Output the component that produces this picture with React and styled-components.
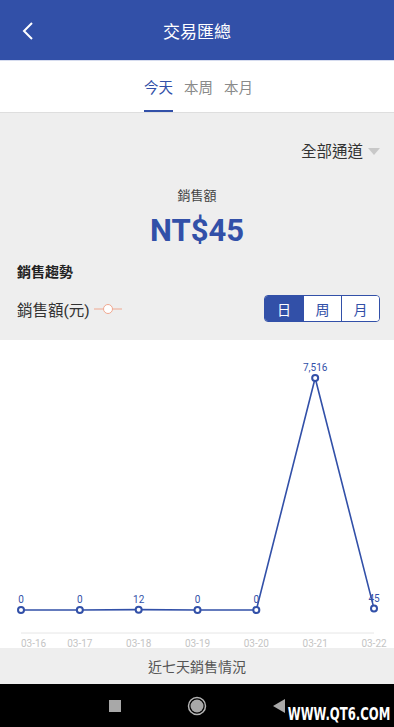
import React, { useState } from "react";
import styled, { createGlobalStyle } from "styled-components";

const BLUE = "#3250a8";
const CJK = `Roboto, "Noto Sans CJK TC", "Noto Sans CJK SC", sans-serif`;

const GlobalStyle = createGlobalStyle`
  html, body { margin: 0; padding: 0; background: #eeeeee; }
  body { font-family: ${CJK}; }
  * { box-sizing: border-box; }
`;

const Screen = styled.div`
  width: 394px;
  height: 727px;
  display: flex;
  flex-direction: column;
  overflow: hidden;
  background: #eeeeee;
`;

const Header = styled.header`
  height: 61px;
  flex-shrink: 0;
  background: ${BLUE};
  border-bottom: 1px solid #d6dcef;
  position: relative;
  display: flex;
  align-items: center;
  justify-content: center;
  color: #fff;
  font-size: 17px;
`;

const BackButton = styled.button`
  position: absolute;
  left: 18px;
  top: 20px;
  width: 20px;
  height: 22px;
  border: 0;
  padding: 0;
  background: none;
  display: flex;
  align-items: center;
  justify-content: center;
`;

const Tabs = styled.nav`
  height: 52px;
  flex-shrink: 0;
  background: #fff;
  border-bottom: 1px solid #dedede;
  display: flex;
  justify-content: center;
  gap: 11px;
  padding-left: 3px;
`;

const Tab = styled.div`
  position: relative;
  display: flex;
  align-items: center;
  font-size: 14.5px;
  color: ${(p) => (p.$active ? BLUE : "#8a8a8a")};
  &::after {
    content: "";
    display: ${(p) => (p.$active ? "block" : "none")};
    position: absolute;
    left: 0;
    right: 0;
    bottom: 0;
    height: 2px;
    background: ${BLUE};
  }
`;

const Summary = styled.section`
  display: flex;
  flex-direction: column;
  padding: 24px 14px 0 17px;
  height: 227px;
  flex-shrink: 0;
`;

const ChannelRow = styled.div`
  display: flex;
  justify-content: flex-end;
  align-items: center;
  gap: 5px;
  font-size: 15.5px;
  color: #333;
  height: 26px;
`;

const Caret = styled.span`
  width: 0;
  height: 0;
  border-left: 6px solid transparent;
  border-right: 6px solid transparent;
  border-top: 7px solid #c8c8c8;
  margin-top: 2px;
`;

const SalesLabel = styled.div`
  text-align: center;
  font-size: 13px;
  color: #444;
  margin-top: 22px;
  padding-right: 3px;
`;

const SalesValue = styled.div`
  text-align: center;
  font-family: Roboto, sans-serif;
  font-weight: 700;
  font-size: 31px;
  color: ${BLUE};
  margin-top: 7px;
  padding-right: 3px;
  line-height: 40px;
`;

const TrendTitle = styled.div`
  font-weight: 700;
  font-size: 14px;
  color: #222;
  margin-top: 10px;
`;

const TrendRow = styled.div`
  display: flex;
  align-items: center;
  justify-content: space-between;
  margin-top: 14px;
`;

const Legend = styled.div`
  display: flex;
  align-items: center;
  gap: 4px;
  font-size: 15.5px;
  color: #333;
`;

const Segmented = styled.div`
  display: flex;
  border: 1px solid ${BLUE};
  border-radius: 4px;
  overflow: hidden;
  height: 27px;
`;

const Segment = styled.button`
  width: 38px;
  border: 0;
  border-left: ${(p) => (p.$first ? "0" : `1px solid ${BLUE}`)};
  background: ${(p) => (p.$active ? BLUE : "#fff")};
  color: ${(p) => (p.$active ? "#fff" : BLUE)};
  font-family: ${CJK};
  font-size: 14px;
  padding: 0;
`;

const ChartArea = styled.div`
  height: 308px;
  flex-shrink: 0;
  background: #fff;
`;

const Footer = styled.div`
  height: 36px;
  flex-shrink: 0;
  display: flex;
  align-items: center;
  justify-content: center;
  font-size: 14px;
  color: #555;
  background: #eeeeee;
`;

const NavBar = styled.div`
  flex: 1;
  background: #000;
  position: relative;
  display: flex;
  align-items: center;
  justify-content: center;
  gap: 66px;
`;

const Watermark = styled.span`
  position: absolute;
  right: 4px;
  bottom: 3px;
  color: #fff;
  font-family: "DejaVu Sans Condensed", "DejaVu Sans", sans-serif;
  font-weight: 700;
  font-size: 18px;
  line-height: 20px;
  transform: scaleX(0.72);
  transform-origin: right center;
`;

const days = ["03-16", "03-17", "03-18", "03-19", "03-20", "03-21", "03-22"];
const values = [0, 0, 12, 0, 0, 7516, 45];

function Chart() {
  const x0 = 21;
  const step = (374 - 21) / 6;
  const base = 270;
  const top = 38;
  const pts = values.map((v, i) => [x0 + i * step, base - (v / 7516) * (base - top)]);
  return (
    <svg width="394" height="308" viewBox="0 0 394 308">
      <line x1="21" y1="293" x2="374" y2="293" stroke="#e6e6e6" strokeWidth="1" />
      <polyline
        points={pts.map((p) => p.join(",")).join(" ")}
        fill="none"
        stroke={BLUE}
        strokeWidth="1.6"
      />
      {pts.map(([x, y], i) => (
        <g key={i}>
          <circle cx={x} cy={y} r="3" fill="#fff" stroke={BLUE} strokeWidth="2" />
          <text
            x={x}
            y={y - 7}
            textAnchor="middle"
            fontFamily="Roboto, sans-serif"
            fontSize="10"
            fill={BLUE}
          >
            {values[i].toLocaleString("en-US")}
          </text>
          <text
            x={x}
            y="307"
            textAnchor={i === 0 ? "start" : "middle"}
            fontFamily="Roboto, sans-serif"
            fontSize="10"
            fill="#c4c4c4"
          >
            {days[i]}
          </text>
        </g>
      ))}
    </svg>
  );
}

export default function App() {
  const [tab, setTab] = useState(0);
  const [period, setPeriod] = useState(0);
  return (
    <Screen>
      <GlobalStyle />
      <Header>
        <BackButton aria-label="back">
          <svg width="12" height="20" viewBox="0 0 12 20">
            <path d="M10 2 L2 10 L10 18" fill="none" stroke="#fff" strokeWidth="2" />
          </svg>
        </BackButton>
        交易匯總
      </Header>
      <Tabs>
        {["今天", "本周", "本月"].map((t, i) => (
          <Tab key={t} $active={tab === i} onClick={() => setTab(i)}>
            {t}
          </Tab>
        ))}
      </Tabs>
      <Summary>
        <ChannelRow>
          全部通道
          <Caret />
        </ChannelRow>
        <SalesLabel>銷售額</SalesLabel>
        <SalesValue>NT$45</SalesValue>
        <TrendTitle>銷售趨勢</TrendTitle>
        <TrendRow>
          <Legend>
            銷售額(元)
            <svg width="28" height="12" viewBox="0 0 28 12">
              <line x1="0" y1="6" x2="28" y2="6" stroke="#f0a890" strokeWidth="1" />
              <circle cx="14" cy="6" r="4.5" fill="#fff" stroke="#f0a890" strokeWidth="1" />
            </svg>
          </Legend>
          <Segmented>
            {["日", "周", "月"].map((s, i) => (
              <Segment key={s} $first={i === 0} $active={period === i} onClick={() => setPeriod(i)}>
                {s}
              </Segment>
            ))}
          </Segmented>
        </TrendRow>
      </Summary>
      <ChartArea>
        <Chart />
      </ChartArea>
      <Footer>近七天銷售情況</Footer>
      <NavBar>
        <svg width="12" height="12" viewBox="0 0 12 12">
          <rect x="0" y="0" width="12" height="12" fill="#a8a8a8" />
        </svg>
        <svg width="20" height="20" viewBox="0 0 20 20">
          <circle cx="10" cy="10" r="8.5" fill="none" stroke="#b5b5b5" strokeWidth="1.5" />
          <circle cx="10" cy="10" r="6.5" fill="#a8a8a8" />
        </svg>
        <svg width="12" height="14" viewBox="0 0 12 14">
          <path d="M12 0 L0 7 L12 14 Z" fill="#a8a8a8" />
        </svg>
        <Watermark>WWW.QT6.COM</Watermark>
      </NavBar>
    </Screen>
  );
}
